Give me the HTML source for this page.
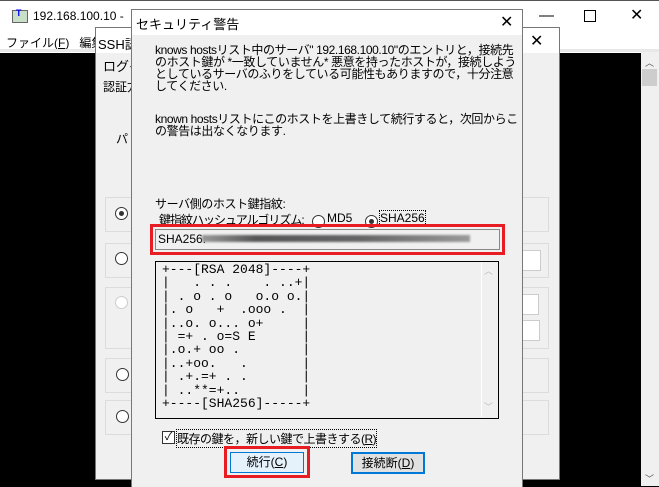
<html><head><style>
body{margin:0;width:659px;height:486px;overflow:hidden;position:relative;background:#000;font-family:"Liberation Sans","Noto Sans CJK JP",sans-serif;font-size:12px;color:#000}
.a{position:absolute}
.rad{position:absolute;width:11px;height:11px;border:1px solid #333;border-radius:50%;background:#fff}
.gb{position:absolute;border:1px solid #dcdcdc}
</style></head><body>
<div class="a" style="left:0;top:0;width:659px;height:52px;background:#fff;border-top:1px solid #555"></div>
<div class="a" style="left:12px;top:10px;width:14px;height:11px;background:#c8e0c8;border:1px solid #666"></div>
<div class="a" style="left:16px;top:8px;font-size:9px;color:#00f;font-weight:bold">T</div>
<div class="a" style="left:33px;top:9px">192.168.100.10 -</div>
<div class="a" style="left:6px;top:34px">ファイル(<u>F</u>)&nbsp;&nbsp; 編集</div>
<div class="a" style="left:539px;top:7px;font-size:15px">—</div>
<div class="a" style="left:584px;top:10px;width:10px;height:10px;border:1px solid #000"></div>
<div class="a" style="left:630px;top:5px;font-size:16px">✕</div>
<div class="a" style="left:0;top:49px;width:659px;height:3px;background:#e8e8e8"></div>
<div class="a" style="left:641px;top:52px;width:18px;height:434px;background:#f0f0f0"></div>
<div class="a" style="left:642px;top:69px;width:15px;height:17px;background:#cdcdcd"></div>
<div class="a" style="left:645px;top:56px;font-size:9px;color:#555">︿</div>
<div class="a" style="left:645px;top:472px;font-size:9px;color:#555">﹀</div>
<div class="a" style="left:95px;top:27px;width:463px;height:451px;background:#f0f0f0;border:1px solid #777"></div>
<div class="a" style="left:96px;top:28px;width:463px;height:25px;background:#fff"></div>
<div class="a" style="left:98px;top:34px;font-size:13px">SSH認</div>
<div class="a" style="left:530px;top:31px;font-size:16px">✕</div>
<div class="a" style="left:103px;top:56px;font-size:13px">ログイ</div>
<div class="a" style="left:103px;top:78px">認証方</div>
<div class="a" style="left:116px;top:130px">パ</div>
<div class="gb" style="left:105px;top:197px;width:442px;height:33px"></div>
<div class="gb" style="left:105px;top:243px;width:442px;height:33px"></div>
<div class="gb" style="left:105px;top:287px;width:442px;height:60px"></div>
<div class="gb" style="left:105px;top:358px;width:442px;height:33px"></div>
<div class="gb" style="left:105px;top:400px;width:442px;height:33px"></div>
<div class="a" style="left:515px;top:250px;width:24px;height:19px;background:#fff;border:1px solid #ccc"></div>
<div class="a" style="left:515px;top:294px;width:22px;height:19px;background:#fff;border:1px solid #ccc"></div>
<div class="a" style="left:515px;top:320px;width:23px;height:19px;background:#fff;border:1px solid #ccc"></div>
<div class="rad" style="left:115px;top:207px"></div><div class="a" style="left:119px;top:211px;width:5px;height:5px;border-radius:50%;background:#333"></div>
<div class="rad" style="left:115px;top:252px"></div>
<div class="rad" style="left:115px;top:296px;border-color:#ccc"></div>
<div class="rad" style="left:116px;top:368px"></div>
<div class="rad" style="left:116px;top:410px"></div>
<div class="a" style="left:131px;top:9px;width:390px;height:477px;background:#f0f0f0;border:1px solid #777;border-bottom:none"></div>
<div class="a" style="left:132px;top:10px;width:390px;height:25px;background:#fff"></div>
<div class="a" style="left:136px;top:14px;font-size:13px">セキュリティ警告</div>
<div class="a" style="left:500px;top:12px;font-size:16px">✕</div>
<div class="a" style="left:155px;top:44px;line-height:12px;font-size:12px;letter-spacing:-0.4px">knows hostsリスト中のサーバ" 192.168.100.10"のエントリと，接続先<br>のホスト鍵が *一致していません* 悪意を持ったホストが，接続しよう<br>としているサーバのふりをしている可能性もありますので，十分注意<br>してください.</div>
<div class="a" style="left:155px;top:113px;line-height:12px;font-size:12px;letter-spacing:-0.4px">known hostsリストにこのホストを上書きして続行すると，次回からこ<br>の警告は出なくなります.</div>
<div class="a" style="left:155px;top:195px;font-size:12px;letter-spacing:-0.4px">サーバ側のホスト鍵指紋:</div>
<div class="a" style="left:159px;top:211px;font-size:12px;letter-spacing:-1px">鍵指紋ハッシュアルゴリズム:</div>
<div class="rad" style="left:312px;top:215px"></div><div class="a" style="left:327px;top:211px">MD5</div>
<div class="rad" style="left:365px;top:215px"></div><div class="a" style="left:369px;top:219px;width:5px;height:5px;border-radius:50%;background:#333"></div>
<div class="a" style="left:380px;top:211px;outline:1px dotted #000">SHA256</div>
<div class="a" style="left:150px;top:224px;width:349px;height:25px;border:3px solid #e81c23"></div>
<div class="a" style="left:155px;top:229px;width:343px;height:19px;border:1px solid #888"></div>
<div class="a" style="left:158px;top:232px;font-size:12px">SHA256:</div>
<div class="a" style="left:202px;top:235px;width:268px;height:7px;background:linear-gradient(90deg,#999,#555 20%,#666 60%,#999);filter:blur(1px)"></div>
<div class="a" style="left:155px;top:261px;width:342px;height:156px;border:1px solid #000;background:#f0f0f0"></div>
<div class="a" style="left:481px;top:262px;width:16px;height:155px;background:#f0f0f0;border-left:1px solid #fff"></div>
<div class="a" style="left:484px;top:264px;font-size:9px;color:#bbb">︿</div>
<div class="a" style="left:484px;top:400px;font-size:9px;color:#bbb">﹀</div>
<pre class="a" style="left:162px;top:263px;margin:0;font-family:'Liberation Mono',monospace;font-size:13px;line-height:13.4px">+---[RSA 2048]----+
|   . . .    . ..+|
| . o . o   o.o o.|
|. o   +  .ooo .  |
|..o. o... o+     |
| =+ . o=S E      |
|.o.+ oo .        |
|..+oo.   .       |
| .+.=+ . .       |
| ..**=+..        |
+----[SHA256]-----+</pre>
<div class="a" style="left:162px;top:431px;width:11px;height:11px;border:1px solid #333;background:#fff;font-size:11px;line-height:11px;text-align:center">✓</div>
<div class="a" style="left:177px;top:430px;outline:1px dotted #000;letter-spacing:-0.5px">既存の鍵を，新しい鍵で上書きする(<u>R</u>)</div>
<div class="a" style="left:224px;top:446px;width:80px;height:26px;border:3px solid #e81c23"></div>
<div class="a" style="left:230px;top:452px;width:72px;height:19px;border:1px solid #0078d7;background:#e5f1fb;text-align:center;line-height:19px">続行(<u>C</u>)</div>
<div class="a" style="left:351px;top:452px;width:70px;height:18px;border:2px solid #0078d7;background:#e1e1e1;text-align:center;line-height:18px">接続断(<u>D</u>)</div>
</body></html>
